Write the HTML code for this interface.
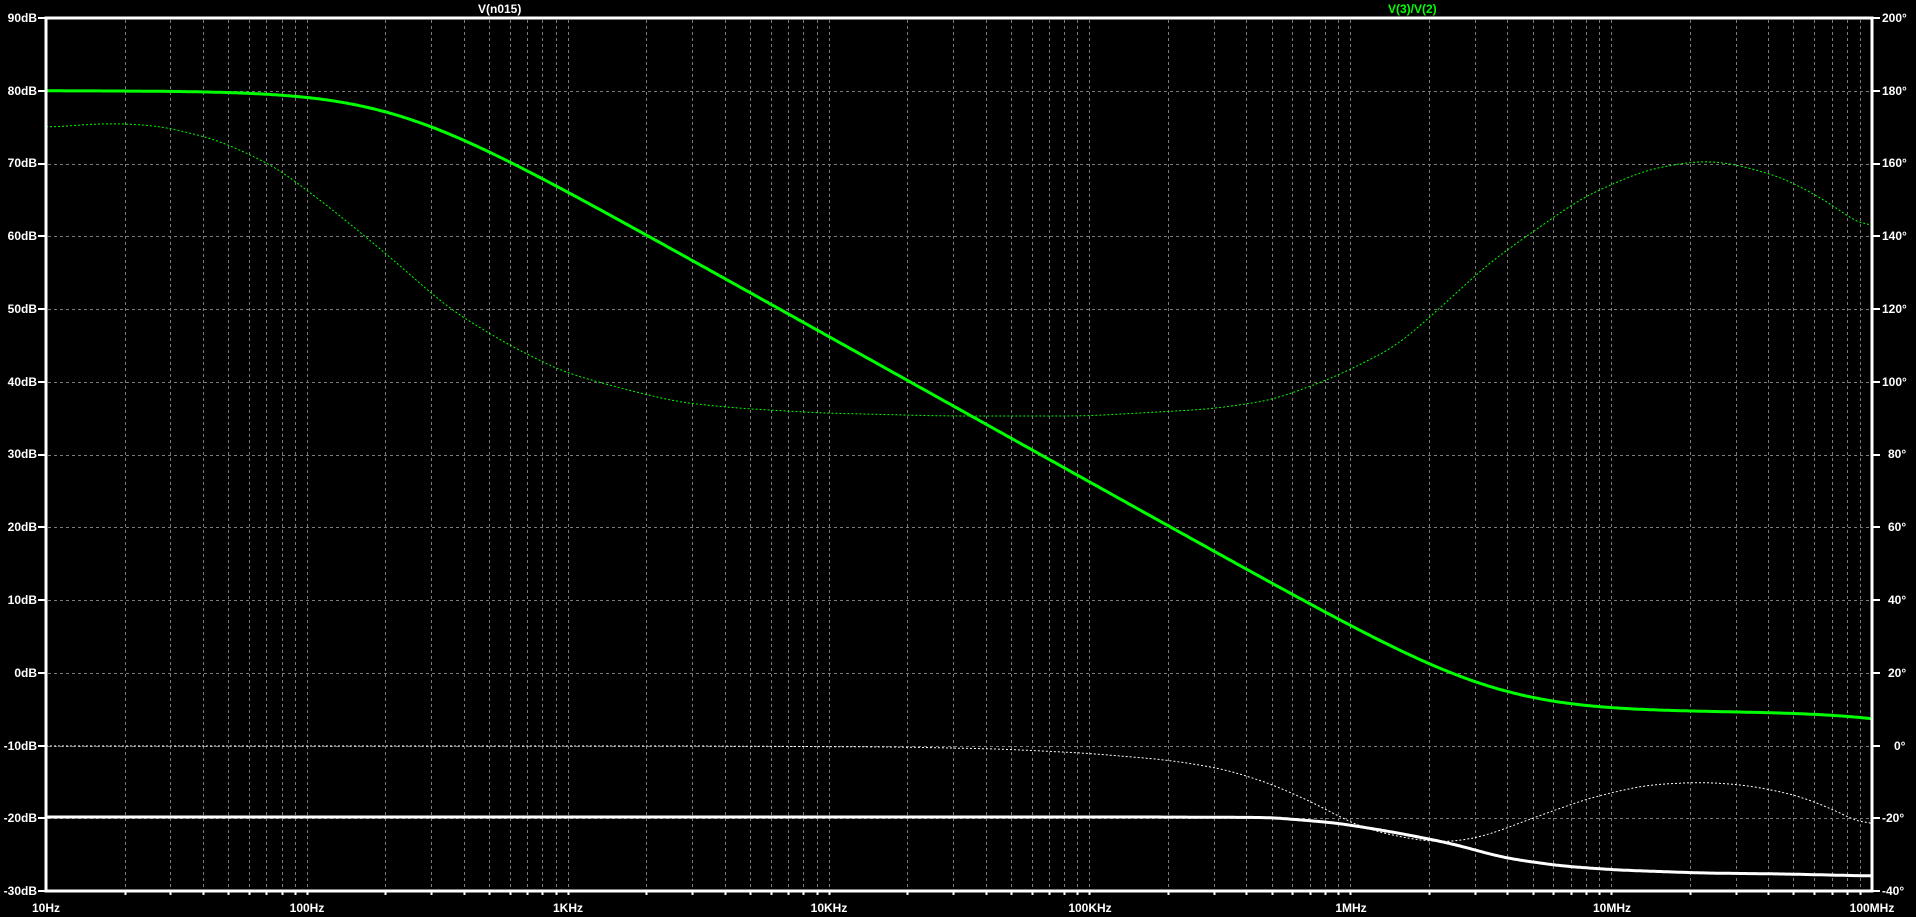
<!DOCTYPE html>
<html><head><meta charset="utf-8"><style>
html,body{margin:0;padding:0;background:#000;width:1916px;height:917px;overflow:hidden}
svg{display:block}
text{font-family:"Liberation Sans",sans-serif;font-weight:bold;font-size:12px;fill:#fff}
</style></head><body>
<svg id="s" width="1916" height="917" viewBox="0 0 1916 917">
<g id="grid" stroke="#7a7a7a" stroke-width="1" stroke-dasharray="3,3" fill="none"></g>
<g id="curves" fill="none"></g>
<g id="axes" stroke="#fff" fill="none"></g>
<text x="478" y="13">V(n015)</text>
<text x="1388" y="13" style="fill:#00ff00">V(3)/V(2)</text>
<g text-anchor="end">
<text x="37" y="22">90dB</text><text x="37" y="95">80dB</text><text x="37" y="167">70dB</text>
<text x="37" y="240">60dB</text><text x="37" y="313">50dB</text><text x="37" y="386">40dB</text>
<text x="37" y="458">30dB</text><text x="37" y="531">20dB</text><text x="37" y="604">10dB</text>
<text x="37" y="677">0dB</text><text x="37" y="750">-10dB</text><text x="37" y="822">-20dB</text>
<text x="37" y="895">-30dB</text>
</g>
<g>
<text x="1882" y="22">200°</text><text x="1882" y="95">180°</text><text x="1882" y="167">160°</text>
<text x="1882" y="240">140°</text><text x="1882" y="313">120°</text><text x="1882" y="386">100°</text>
<text x="1888" y="458">80°</text><text x="1888" y="531">60°</text><text x="1888" y="604">40°</text>
<text x="1888" y="677">20°</text><text x="1894" y="750">0°</text><text x="1882" y="822">-20°</text>
<text x="1882" y="895">-40°</text>
</g>
<g text-anchor="middle">
<text x="46" y="912">10Hz</text><text x="307" y="912">100Hz</text><text x="568" y="912">1KHz</text>
<text x="829" y="912">10KHz</text><text x="1090" y="912">100KHz</text><text x="1351" y="912">1MHz</text>
<text x="1612" y="912">10MHz</text><text x="1872" y="912">100MHz</text>
</g>
</svg>
<script>
var NS="http://www.w3.org/2000/svg";
function el(p,t,a){var e=document.createElementNS(NS,t);for(var k in a)e.setAttribute(k,a[k]);p.appendChild(e);return e;}
var L=46,R=1872,T=18,B=891,D=(R-L)/7,H=(B-T)/12;
var g=document.getElementById('grid'),ax=document.getElementById('axes'),cv=document.getElementById('curves');
for(var d=0;d<7;d++)for(var k=1;k<10;k++){var x=L+D*(d+Math.log10(k));if(d==0&&k==1)continue;
 x=Math.round(x)+0.5;el(g,'line',{x1:x,y1:T+2,x2:x,y2:B-1});
 el(ax,'line',{x1:x,y1:B,x2:x,y2:B+4,'stroke-width':2});}
for(var i=1;i<12;i++){var y=Math.round(T+H*i)+0.5;el(g,'line',{x1:L+2,y1:y,x2:R-1,y2:y});}
for(var i=0;i<=12;i++){var y=Math.round(T+H*i);el(ax,'line',{x1:38,y1:y,x2:L,y2:y,'stroke-width':2});el(ax,'line',{x1:R,y1:y,x2:1880,y2:y,'stroke-width':2});}
el(ax,'rect',{x:L,y:T,width:R-L,height:B-T,'stroke-width':3});
function smooth(pts,w,passes){var arr=[],j=0;
 for(var x=L;x<=R;x++){while(j<pts.length-2&&pts[j+1][0]<x)j++;var a=pts[j],b=pts[j+1];
  var t=(x-a[0])/(b[0]-a[0]);t=Math.max(0,Math.min(1,t));arr.push(a[1]+(b[1]-a[1])*t);}
 for(var p=0;p<passes;p++){var out=[];for(var i=0;i<arr.length;i++){var s=0,n=0;for(var k=-w;k<=w;k++){var q=i+k;if(q<0||q>=arr.length)continue;s+=arr[q];n++;}out.push(s/n);}arr=out;}
 var d='';for(var i=0;i<arr.length;i+=2)d+=(i?' L':'M')+(L+i)+','+arr[i].toFixed(1);return d;}
var gDash=[[46,128],[90,124],[121,123.5],[161,126],[218,140],[276,167],[333,210],[390,257],[448,308],[505,343],[563,372],[620,388],[677,402],[735,408],[821,413],[946,416],[1086,416],[1211,409],[1273,400],[1335,377],[1397,346],[1440,308],[1490,262],[1534,231],[1583,197],[1645,170],[1695,161],[1726,162],[1782,177],[1832,204],[1872,235]];
var wDash=[[46,746],[700,746],[900,747],[1000,749],[1084,753],[1168,760],[1224,769],[1269,783],[1314,803],[1359,827],[1404,838],[1443,843],[1483,837],[1533,818],[1589,798],[1645,785],[1701,782],[1746,785],[1797,795],[1842,813],[1872,831]];
var wSol=[[46,817],[1150,817],[1272,817.5],[1337,823],[1393,832],[1449,843],[1505,858],[1561,866],[1617,870],[1701,873],[1786,874],[1872,876]];
var gd='';for(var x=L;x<=R;x+=2){var f=Math.pow(10,1+(x-L)/D);
 var db=80-10*Math.log10(1+Math.pow(f/205,2))+10*Math.log10(1+Math.pow(f/3.8e6,2))-10*Math.log10(1+Math.pow(f/2e8,2));
 var y=T+(90-db)*H/10;gd+=(x==L?'M':' L')+x+','+y.toFixed(1);}
el(cv,'path',{d:smooth(gDash,14,3),stroke:'#00ff00','stroke-width':1,'stroke-dasharray':'2,2'});
el(cv,'path',{d:smooth(wDash,14,3),stroke:'#fff','stroke-width':1,'stroke-dasharray':'2,2'});
el(cv,'path',{d:smooth(wSol,12,3),stroke:'#fff','stroke-width':3});
el(cv,'path',{d:gd,stroke:'#00ff00','stroke-width':3});
</script>
</body></html>
